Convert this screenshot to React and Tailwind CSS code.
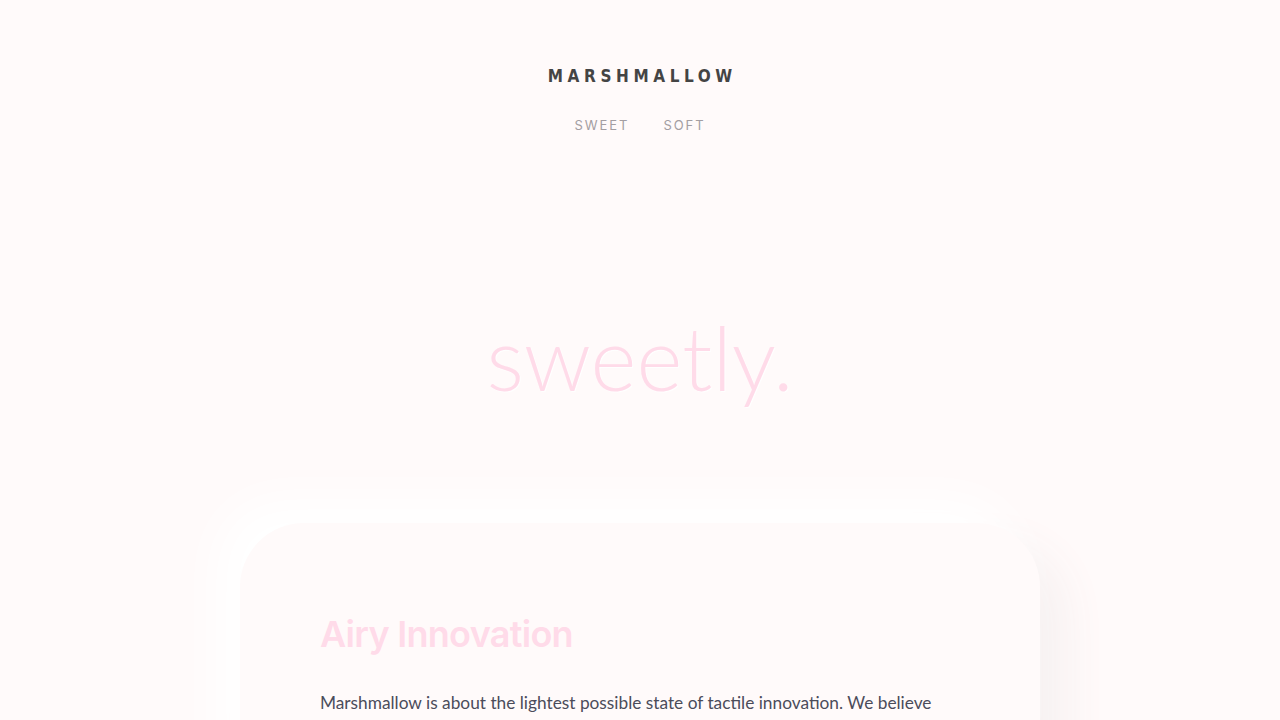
export default function App() {
  return (
    <div className="min-h-screen w-full bg-[#fffafa] overflow-hidden">
      <header className="flex flex-col items-center pt-[65px]">
        <div className="text-[17px] font-bold tracking-[0.27em] text-[#444444] leading-[22px] pl-[0.27em] [font-family:'DejaVu_Sans_Condensed','DejaVu_Sans',sans-serif]">
          MARSHMALLOW
        </div>
        <nav className="mt-[28px] flex gap-[34px] text-[13px] tracking-[0.15em] text-[#a39ea2] leading-[20px] [font-family:Inter,sans-serif]">
          <span>SWEET</span>
          <span>SOFT</span>
        </nav>
      </header>
      <section className="flex justify-center pt-[178px]">
        <h1 className="text-[88px] font-light leading-none text-[#ffdbe9] [font-family:Lato,sans-serif] [text-shadow:1px_1px_1px_#ffffff]">
          sweetly.
        </h1>
      </section>
      <section className="flex justify-center pt-[122px]">
        <div className="w-[800px] rounded-[64px] bg-[#fffafa] px-[80px] pt-[88px] pb-[80px] shadow-[-24px_-24px_48px_#ffffff,24px_24px_48px_#f6f0f0]">
          <h2 className="text-[36px] font-semibold leading-[46px] text-[#ffdbe9] [font-family:Inter,sans-serif] tracking-[-0.02em]">
            Airy Innovation
          </h2>
          <p className="mt-[30px] w-[630px] text-[17.3px] leading-[32px] text-[#4b4c5a] [font-family:Lato,sans-serif]">
            Marshmallow is about the lightest possible state of tactile innovation. We believe
            that touch should feel like a whisper, soft and effortless, every surface pillowy.
          </p>
        </div>
      </section>
    </div>
  );
}
